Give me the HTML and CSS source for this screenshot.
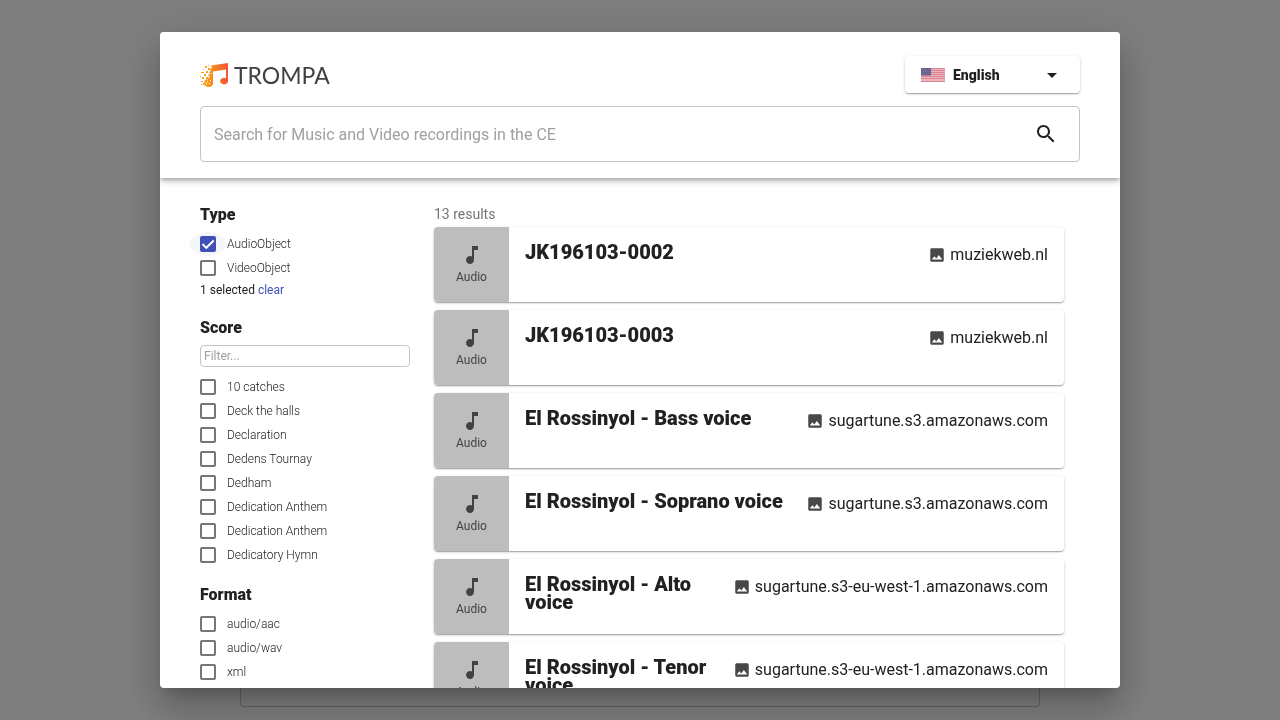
FILE: index.html
```html
<!DOCTYPE html>
<html lang="en">
<head>
<meta charset="utf-8">
<title>TROMPA search</title>
<meta name="viewport" content="width=device-width, initial-scale=1">
<link rel="stylesheet" href="styles.css">
</head>
<body>
<svg width="0" height="0" class="defs" aria-hidden="true">
  <symbol id="note" viewBox="0 0 24 24"><path d="M12 3v10.55c-.59-.34-1.27-.55-2-.55-2.21 0-4 1.79-4 4s1.790 4 4 4 4-1.790 4-4V7h4V3h-6z"/></symbol>
  <symbol id="image" viewBox="0 0 24 24"><path d="M21 19V5c0-1.100-.900-2-2-2H5c-1.100 0-2 .900-2 2v14c0 1.100.900 2 2 2h14c1.100 0 2-.900 2-2zM8.500 13.500l2.500 3.010L14.500 12l4.500 6H5l3.500-4.500z"/></symbol>
</svg>
<div class="page-card"></div>
<div class="backdrop">
  <div class="dialog" role="dialog" aria-label="Search">
    <header class="header">
      <div class="topbar">
        <div class="brand">
          <svg class="brand-mark" viewBox="0 0 28 24" aria-hidden="true">
            <defs><linearGradient id="flame" x1="0" y1="0" x2="1" y2="0"><stop offset="0" stop-color="#faa61a"/><stop offset=".4" stop-color="#f7861f"/><stop offset="1" stop-color="#f4553b"/></linearGradient></defs>
            <path fill="url(#flame)" d="M11 2.500 28 0v18.500a4 3.300 0 1 1-2-3.300V6.500L13 8.500V20a4.400 4 0 1 1-5-4l1-2-1-2 2-1-1-2 2-1-1-2 2-1z"/>
            <g fill="#f9a01f"><path d="M5 3h2v2H5zM8 5h2v2H8zM3 6h1v1H3zM6 8h2v2H6zM1 9h2v1H1zM4 11h2v2H4zM0 13h1v1H0zM2 14h2v2H2zM6 14h2v2H6zM1 18h2v1H1zM3 20h2v2H3zM8 2h1v1H8zM5 17h2v1H5zM1 21h1v1H1zM3 9h1v1H3z"/></g>
            <path fill="#fff" d="M7 18h1v1H7zM10 17h1v1h-1zM9 20h1v1H9zM9 13h1v1H9zM11 10h1v1h-1zM6 20h1v1H6z"/>
          </svg>
          <span class="brand-name">TROMPA</span>
        </div>
        <button class="language" type="button">
          <svg class="flag" viewBox="0 0 24 14" aria-hidden="true">
            <path fill="#ecb4bb" d="M0 0h24v14H0z"/>
            <path stroke="#d98490" d="M0 .5h24M0 2.500h24M0 4.500h24M0 6.500h24M0 8.500h24M0 10.500h24M0 13.500h24"/>
            <path fill="#62628f" d="M0 0h10v7.500H0z"/>
            <path stroke="#8080a8" stroke-dasharray="1 1" d="M1 1.500h8M2 3.500h7M1 5.500h8"/>
          </svg>
          <span>English</span>
          <svg class="caret" viewBox="0 0 24 24" aria-hidden="true"><path d="M7 10l5 5 5-5z"/></svg>
        </button>
      </div>
      <form class="search" role="search">
        <input type="text" class="search-input" aria-label="Search" placeholder="Search for Music and Video recordings in the CE">
        <button type="button" class="search-button" aria-label="Submit search">
          <svg viewBox="0 0 24 24" aria-hidden="true"><path d="M15.500 14h-.79l-.28-.27C15.410 12.590 16 11.110 16 9.500 16 5.910 13.090 3 9.500 3S3 5.910 3 9.500 5.910 16 9.500 16c1.610 0 3.090-.59 4.230-1.570l.27.28v.79l5 4.990L20.490 19l-4.990-5zm-6 0C7.010 14 5 11.990 5 9.500S7.010 5 9.500 5 14 7.010 14 9.500 11.990 14 9.500 14z"/></svg>
        </button>
      </form>
    </header>
    <div class="content">
      <aside class="filters">
        <section class="facet">
          <h2 class="facet-title">Type</h2>
          <label class="option"><input type="checkbox" class="check" checked>AudioObject</label>
          <label class="option"><input type="checkbox" class="check">VideoObject</label>
          <p class="selection">1 selected <a href="#" class="clear">clear</a></p>
        </section>
        <section class="facet">
          <h2 class="facet-title">Score</h2>
          <input type="text" class="facet-filter" aria-label="Filter scores" placeholder="Filter...">
          <label class="option"><input type="checkbox" class="check">10 catches</label>
          <label class="option"><input type="checkbox" class="check">Deck the halls</label>
          <label class="option"><input type="checkbox" class="check">Declaration</label>
          <label class="option"><input type="checkbox" class="check">Dedens Tournay</label>
          <label class="option"><input type="checkbox" class="check">Dedham</label>
          <label class="option"><input type="checkbox" class="check">Dedication Anthem</label>
          <label class="option"><input type="checkbox" class="check">Dedication Anthem</label>
          <label class="option"><input type="checkbox" class="check">Dedicatory Hymn</label>
        </section>
        <section class="facet">
          <h2 class="facet-title">Format</h2>
          <label class="option"><input type="checkbox" class="check">audio/aac</label>
          <label class="option"><input type="checkbox" class="check">audio/wav</label>
          <label class="option"><input type="checkbox" class="check">xml</label>
        </section>
      </aside>
      <main class="results">
        <p class="count">13 results</p>
        <article class="card"><div class="kind"><svg><use href="#note"/></svg>Audio</div><div class="info"><h3 class="title">JK196103-0002</h3><span class="source"><svg><use href="#image"/></svg>muziekweb.nl</span></div></article>
        <article class="card"><div class="kind"><svg><use href="#note"/></svg>Audio</div><div class="info"><h3 class="title">JK196103-0003</h3><span class="source"><svg><use href="#image"/></svg>muziekweb.nl</span></div></article>
        <article class="card"><div class="kind"><svg><use href="#note"/></svg>Audio</div><div class="info"><h3 class="title">El Rossinyol - Bass voice</h3><span class="source"><svg><use href="#image"/></svg>sugartune.s3.amazonaws.com</span></div></article>
        <article class="card"><div class="kind"><svg><use href="#note"/></svg>Audio</div><div class="info"><h3 class="title">El Rossinyol - Soprano voice</h3><span class="source"><svg><use href="#image"/></svg>sugartune.s3.amazonaws.com</span></div></article>
        <article class="card"><div class="kind"><svg><use href="#note"/></svg>Audio</div><div class="info"><h3 class="title">El Rossinyol - Alto voice</h3><span class="source"><svg><use href="#image"/></svg>sugartune.s3-eu-west-1.amazonaws.com</span></div></article>
        <article class="card"><div class="kind"><svg><use href="#note"/></svg>Audio</div><div class="info"><h3 class="title">El Rossinyol - Tenor voice</h3><span class="source"><svg><use href="#image"/></svg>sugartune.s3-eu-west-1.amazonaws.com</span></div></article>
      </main>
    </div>
  </div>
</div>
</body>
</html>
```
FILE: styles.css
```css
* { box-sizing: border-box; }
body {
  margin: 0;
  height: 100vh;
  overflow: hidden;
  background: #fff;
  color: #212121;
  font-family: Roboto, "Liberation Sans", sans-serif;
  font-size: 16px;
}
h2, h3, p { margin: 0; }
button, input { font: inherit; color: inherit; }
svg { fill: currentColor; flex: none; }
.defs { position: absolute; }

.page-card {
  max-width: 800px;
  height: calc(100vh - 13px);
  margin: 0 auto;
  border: 1px solid #c4c4c4;
  border-top: 0;
  border-radius: 0 0 4px 4px;
  clip-path: inset(50% 0 0 0);
}
.backdrop {
  position: fixed;
  inset: 0;
  padding: 32px;
  display: flex;
  justify-content: center;
  background: rgba(0, 0, 0, .5);
}
.dialog {
  display: flex;
  flex-direction: column;
  width: 100%;
  max-width: 960px;
  overflow: hidden;
  border-radius: 4px;
  background: #fff;
  box-shadow: 0 11px 15px -7px rgba(0, 0, 0, .2), 0 24px 38px 3px rgba(0, 0, 0, .14), 0 9px 46px 8px rgba(0, 0, 0, .12);
}

.header {
  position: relative;
  flex: none;
  padding: 24px 40px 16px;
  background: #fff;
  box-shadow: 0 2px 4px -1px rgba(0, 0, 0, .2), 0 4px 5px rgba(0, 0, 0, .14), 0 1px 10px rgba(0, 0, 0, .12);
}
.topbar {
  display: flex;
  align-items: center;
  justify-content: space-between;
  margin-bottom: 13px;
}
.brand { display: flex; align-items: center; gap: 6px; }
.brand-mark { width: 28px; height: 24px; }
.brand-name {
  color: #414042;
  font-family: Lato, sans-serif;
  font-size: 23px;
  line-height: 24px;
}
.language {
  display: flex;
  align-items: center;
  width: 175px;
  height: 37px;
  padding: 0 16px;
  border: 0;
  border-radius: 4px;
  background: #fff;
  font-size: 14px;
  font-weight: 900;
  box-shadow: 0 1px 3px rgba(0, 0, 0, .2), 0 1px 1px rgba(0, 0, 0, .14), 0 2px 1px -1px rgba(0, 0, 0, .12);
}
.flag { width: 24px; height: 14px; margin-right: 8px; }
.caret { width: 24px; height: 24px; margin-left: auto; }
.search {
  display: flex;
  align-items: center;
  height: 56px;
  padding: 0 9px 0 13px;
  border: 1px solid #c4c4c4;
  border-radius: 4px;
}
.search-input {
  flex: 1;
  min-width: 0;
  padding: 0;
  border: 0;
  outline: 0;
  background: none;
}
.search-input::placeholder, .facet-filter::placeholder { color: #a0a0a0; opacity: 1; }
.search-button { display: flex; padding: 12px; border: 0; background: none; }
.search-button svg { width: 24px; height: 24px; }

.content {
  display: grid;
  grid-template-columns: 210px 1fr;
  gap: 24px;
  min-height: 0;
  overflow: hidden;
  padding: 24px 56px 0 40px;
}
.facet { margin-bottom: 15px; }
.facet-title { padding-bottom: 4px; font-size: 16px; font-weight: 900; line-height: 26px; }
.option {
  display: flex;
  align-items: center;
  gap: 11px;
  height: 24px;
  font-size: 12px;
  font-weight: 300;
}
.check {
  appearance: none;
  flex: none;
  width: 16px;
  height: 16px;
  margin: 0;
  border: 2px solid #757575;
  border-radius: 2px;
}
.check:checked {
  border: 0;
  background: #3f51b5 url("data:image/svg+xml,%3Csvg xmlns='http://www.w3.org/2000/svg' viewBox='0 0 16 16'%3E%3Cpath d='M2.500 8 6.300 11.800 13.700 4.500' fill='none' stroke='white' stroke-width='1.900'/%3E%3C/svg%3E");
}
.option:has(.check:checked) {
  margin-left: -11px;
  padding-left: 11px;
  background: radial-gradient(19px 12px at 19px 12px, #f5f6fb 95%, transparent);
}
.selection { font-size: 12px; line-height: 20px; }
.clear { color: #3f51b5; text-decoration: none; }
.facet-filter {
  display: block;
  width: 100%;
  height: 22px;
  margin-bottom: 8px;
  padding: 0 3px;
  border: 1px solid #c4c4c4;
  border-radius: 4px;
  font-size: 12px;
}

.results { min-width: 0; }
.count { color: #757575; font-size: 14px; line-height: 24px; padding-bottom: 1px; }
.card {
  display: flex;
  min-height: 75px;
  margin-bottom: 8px;
  overflow: hidden;
  border-radius: 4px;
  background: #fff;
  box-shadow: 0 1px 3px rgba(0, 0, 0, .2), 0 1px 1px rgba(0, 0, 0, .14), 0 2px 1px -1px rgba(0, 0, 0, .12);
}
.kind {
  display: flex;
  flex: none;
  flex-direction: column;
  align-items: center;
  justify-content: center;
  width: 75px;
  background: #bdbdbd;
  color: #424242;
  font-size: 12px;
  line-height: 20px;
}
.kind svg { width: 24px; height: 24px; }
.info {
  display: flex;
  flex: 1;
  align-items: flex-start;
  justify-content: space-between;
  gap: 8px;
  padding: 16px;
}
.title { font-size: 20px; font-weight: 900; line-height: 18px; }
.source { display: flex; flex: none; align-items: center; gap: 4px; line-height: 24px; }
.source svg { width: 18px; height: 18px; color: #484848; }
```
